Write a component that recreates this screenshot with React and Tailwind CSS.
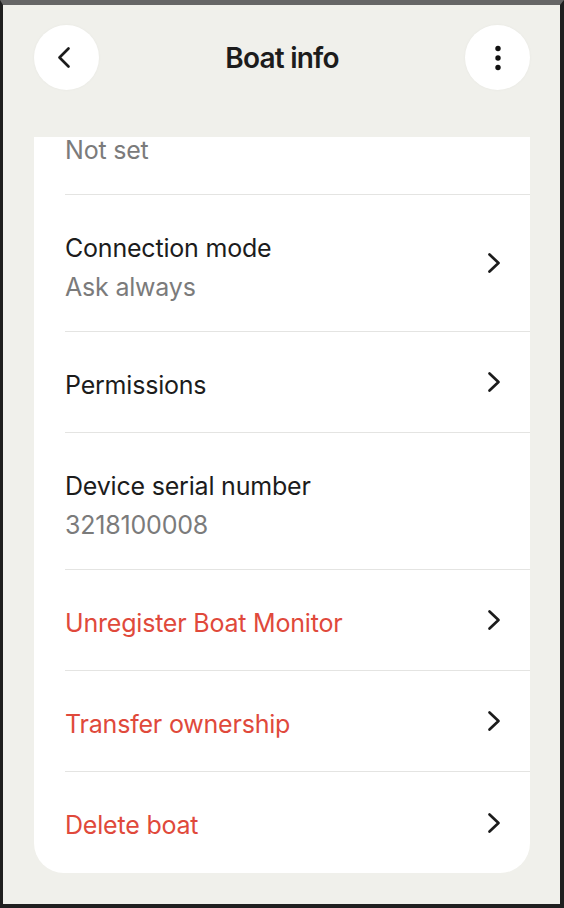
import React from "react";

const rows = [
  { subtitle: "Not set", cut: true },
  { title: "Connection mode", subtitle: "Ask always", chevron: true },
  { title: "Permissions", chevron: true },
  { title: "Device serial number", subtitle: "3218100008" },
  { title: "Unregister Boat Monitor", danger: true, chevron: true },
  { title: "Transfer ownership", danger: true, chevron: true },
  { title: "Delete boat", danger: true, chevron: true, last: true },
];

function Chevron() {
  return (
    <svg width="14" height="22" viewBox="0 0 14 22" fill="none" className="shrink-0">
      <polyline
        points="2.5,2.5 11.5,11 2.5,19.5"
        stroke="#1c1c1c"
        strokeWidth="2.7"
        strokeLinecap="round"
        strokeLinejoin="round"
      />
    </svg>
  );
}

function Row({ row }) {
  const titleColor = row.danger ? "text-[#e0493b]" : "text-[#1c1c1c]";
  let pad = "pt-[38px] pb-[32px]";
  if (row.cut) pad = "pt-0 pb-[31px]";
  else if (row.subtitle) pad = "pt-[38px] pb-[29px]";
  else if (row.last) pad = "pt-[38px] pb-[33px]";
  return (
    <div
      className={`ml-[31px] flex items-center justify-between pr-[29px] ${
        row.last ? "" : "border-b border-[#e4e4e2]"
      }`}
    >
      <div className={`flex flex-col ${pad}`}>
        {row.title && <p className={`text-[25px] leading-[30px] tracking-[-0.2px] ${titleColor}`}>{row.title}</p>}
        {row.subtitle && (
          <p
            className={`text-[25px] tracking-[-0.2px] text-[#7b7b7b] ${
              row.cut ? "leading-[26px]" : "mt-[9px] leading-[30px]"
            }`}
          >
            {row.subtitle}
          </p>
        )}
      </div>
      {row.chevron && <Chevron />}
    </div>
  );
}

export default function App() {
  return (
    <div
      className="w-[564px] h-[908px] border-[#1f1f1f] border-l-[3px] border-r-[4px] border-b-[4px] border-t-[5px] border-t-[#666666] overflow-hidden"
      style={{ fontFamily: "Inter, 'Noto Sans', sans-serif" }}
    >
      <div className="flex h-full flex-col bg-[#f0f0eb]">
        <header className="grid grid-cols-[65px_1fr_65px] items-center pl-[31px] pr-[30px] pt-[20px]">
          <button className="flex h-[65px] w-[65px] items-center justify-center rounded-full bg-white pr-[5px] shadow-[0_0_3px_rgba(0,0,0,0.04)]">
            <svg width="14" height="23" viewBox="0 0 14 23" fill="none">
              <polyline
                points="11.5,2.5 2.5,11.5 11.5,20.5"
                stroke="#1c1c1c"
                strokeWidth="2.7"
                strokeLinecap="round"
                strokeLinejoin="round"
              />
            </svg>
          </button>
          <h1 className="text-center text-[28px] font-semibold leading-[34px] tracking-[-0.8px] text-[#1c1c1c]">
            Boat info
          </h1>
          <button className="flex h-[65px] w-[65px] items-center justify-center rounded-full bg-white shadow-[0_0_3px_rgba(0,0,0,0.04)]">
            <svg width="6" height="26" viewBox="0 0 6 26" fill="#111">
              <circle cx="3" cy="3.5" r="2.7" />
              <circle cx="3" cy="13" r="2.7" />
              <circle cx="3" cy="22.5" r="2.7" />
            </svg>
          </button>
        </header>

        <div className="mt-[47px] flex-1 overflow-hidden pl-[31px] pr-[30px]">
          <div className="rounded-b-[30px] bg-white">
            {rows.map((row, i) => (
              <Row key={i} row={row} />
            ))}
          </div>
        </div>
      </div>
    </div>
  );
}
